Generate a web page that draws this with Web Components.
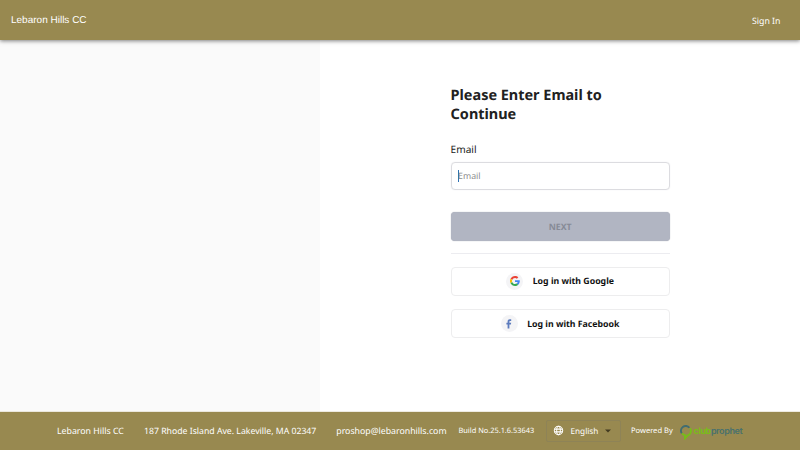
<!DOCTYPE html>
<html lang="en">
<head>
<meta charset="utf-8">
<title>Lebaron Hills CC</title>
<style>
html,body{margin:0;height:100%;overflow:hidden}
body{font-family:"Noto Sans",sans-serif;color:#212121;background:#fff;text-rendering:geometricPrecision}
</style>
</head>
<body>
<club-page></club-page>
<script>
function define(name, html) {
  const template = document.createElement('template');
  template.innerHTML = html;
  customElements.define(name, class extends HTMLElement {
    constructor() {
      super();
      this.attachShadow({ mode: 'open' }).append(template.content.cloneNode(true));
    }
  });
}

define('club-header', `
<style>
:host{display:flex;justify-content:space-between;height:40px;box-sizing:border-box;padding:0 19.5px 0 11px;background:#988950;color:#fff;box-shadow:0 1px 4px rgba(0,0,0,.5);position:relative;z-index:1}
.name{font:10px/41px "Liberation Sans",sans-serif}
.link{font-size:8.75px;line-height:42px}
</style>
<span class="name"><slot></slot></span><span class="link">Sign In</span>`);

define('email-field', `
<style>
:host{display:block}
label{display:block;font-size:10.1px;line-height:14px;color:#222}
.box{display:flex;align-items:center;box-sizing:border-box;height:28px;margin-top:6px;padding-left:6.5px;border:1px solid #dcdce0;border-radius:4px;font-size:8.75px;color:#8c8c8c;box-shadow:0 0 1px #e0e0e4}
.caret{width:1px;height:12px;background:#2f72b5;margin-right:-1px}
</style>
<label>Email</label><div class="box"><i class="caret"></i><span>Email</span></div>`);

define('submit-button', `
<style>
:host{display:flex;align-items:center;justify-content:center;height:29px;border-radius:4px;background:#b1b5c2;color:#868a96;font-weight:700;font-size:8.75px;box-shadow:0 0 1px #9da1ad}
</style><span><slot></slot></span>`);

define('social-button', `
<style>
:host{display:flex;align-items:center;justify-content:center;box-sizing:border-box;height:29.3px;border:1px solid #ededee;border-radius:4px;font-weight:700;font-size:8.75px;color:#111}
.icon{display:flex;align-items:center;justify-content:center;width:17px;height:17px;border-radius:50%;background:#f4f4f6;margin-right:9.5px}
</style><span class="icon"><slot name="icon"></slot></span><span><slot></slot></span>`);

define('language-select', `
<style>
:host{display:flex;align-items:center;box-sizing:border-box;width:75px;height:22px;padding:0 9px 0 6px;border:1px solid #8e8357;border-radius:2px;font-size:8.2px}
span{margin:1px auto 0 6.5px}
svg{display:block}
</style>
<svg width="11" height="11" viewBox="0 0 24 24" fill="none" stroke="#fff" stroke-width="2.2"><circle cx="12" cy="12" r="9.2"/><ellipse cx="12" cy="12" rx="4" ry="9.2"/><path d="M3.5 9h17M3.5 15h17"/></svg>
<span>English</span>
<svg width="6" height="4" viewBox="0 0 6 4"><path d="M0 .5h6L3 3.5z" fill="#423b20"/></svg>`);

define('prophet-logo', `
<style>
:host{display:flex;align-items:center;font:600 9px/16px Inter,sans-serif;color:#49716d}
svg{display:block;margin:2px -.5px 0 0}
b{color:#79bd18;font-weight:700}
.word{display:block;margin-top:2px;letter-spacing:-.4px}
</style>
<svg width="14" height="16" viewBox="0 0 14 16" fill="none" stroke-width="1.9"><path d="M1.9 9.5A4.6 4.6 0 0 1 9.4 3.8" stroke="#416d71"/><path d="M10.1 4.4A4.6 4.6 0 0 1 7.8 11.4L5 14.3V11.2Q3 10.8 2 9.2" stroke="#76bd19"/></svg>
<span class="word"><b>club</b>prophet</span>`);

define('club-footer', `
<style>
:host{display:flex;align-items:center;box-sizing:border-box;height:38.5px;padding-left:57px;background:#988950;color:#fff;font-size:8.75px;white-space:nowrap;box-shadow:0 0 1px #988950}
span{flex:none}
.club{width:87px}.address{width:192.3px;font-size:8.7px}.mail{width:122.2px}.build{width:87.5px;font-size:7.4px}
.powered{margin-left:10px;width:49px;font-size:7.55px}
</style>
<span class="club">Lebaron Hills CC</span><span class="address">187 Rhode Island Ave. Lakeville, MA 02347</span><span class="mail">proshop@lebaronhills.com</span><span class="build">Build No.25.1.6.53643</span><language-select></language-select><span class="powered">Powered By</span><prophet-logo></prophet-logo>`);

define('login-form', `
<style>
:host{display:block;width:219px}
h1{margin:0 0 18px;font-size:14.45px;line-height:19px;font-weight:700}
submit-button{margin-top:22px}
hr{border:0;height:1px;background:#ececf0;margin:12px 0 12.7px}
social-button+social-button{margin-top:13px}
svg{display:block}
</style>
<h1>Please Enter Email to Continue</h1>
<email-field></email-field>
<submit-button>NEXT</submit-button>
<hr>
<social-button><svg slot="icon" width="10" height="10" viewBox="0 0 48 48"><path fill="#EA4335" d="M24 9.5c3.54 0 6.71 1.22 9.21 3.6l6.85-6.85C35.9 2.38 30.47 0 24 0 14.62 0 6.51 5.38 2.56 13.22l7.98 6.19C12.43 13.72 17.74 9.5 24 9.5z"/><path fill="#4285F4" d="M46.98 24.55c0-1.57-.15-3.09-.38-4.55H24v9.02h12.94c-.58 2.96-2.26 5.48-4.78 7.18l7.73 6c4.51-4.18 7.09-10.36 7.09-17.65z"/><path fill="#FBBC05" d="M10.53 28.59a14.5 14.5 0 0 1 0-9.18l-7.98-6.19a24 24 0 0 0 0 21.56z"/><path fill="#34A853" d="M24 48c6.48 0 11.93-2.13 15.89-5.81l-7.73-6c-2.15 1.45-4.92 2.3-8.16 2.3-6.26 0-11.57-4.22-13.47-9.91l-7.98 6.19C6.51 42.62 14.62 48 24 48z"/></svg>Log in with Google</social-button>
<social-button><svg slot="icon" width="6" height="10" viewBox="0 0 6 10"><path d="M1.6 9.5V5.4H.4V3.7h1.2V2.5C1.6 1 2.5.3 3.8.3h1.4v1.6h-.9c-.7 0-.9.3-.9.9v.9h1.8l-.3 1.7H3.4v4.1z" fill="#5c7bbd"/></svg>Log in with Facebook</social-button>`);

define('club-page', `
<style>
:host{display:grid;grid-template-rows:40px 1fr 38.5px;width:800px;height:450px}
main{display:grid;grid-template-columns:320px 1fr}
aside{background:#fafafa}
section{background:#fff;padding:46px 0 0 130.6px}
</style>
<club-header>Lebaron Hills CC</club-header>
<main><aside></aside><section><login-form></login-form></section></main>
<club-footer></club-footer>`);
</script>
</body>
</html>
